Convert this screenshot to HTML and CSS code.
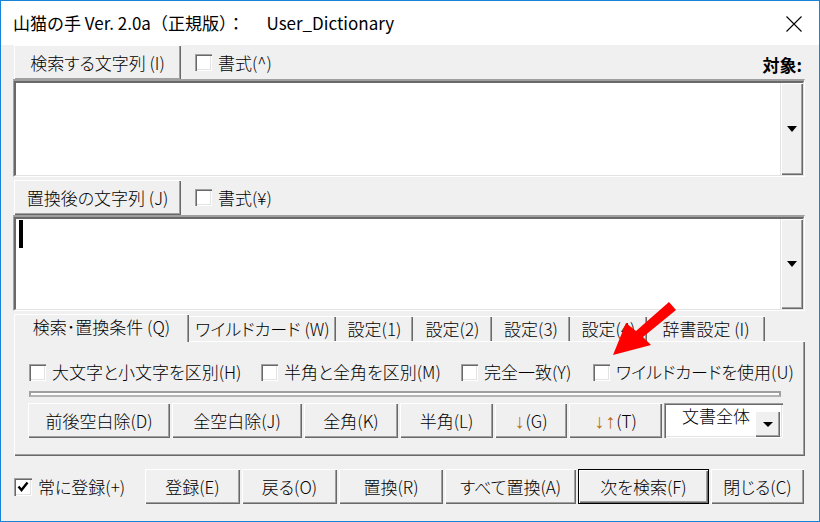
FILE: index.html
```html
<!DOCTYPE html>
<html lang="ja">
<head>
<meta charset="utf-8">
<title>山猫の手</title>
<link rel="stylesheet" href="styles.css">
</head>
<body>
<div class="window">
  <div class="titlebar">
    <span class="title">山猫の手 Ver. 2.0a（正規版）：<span class="title-name">User_Dictionary</span></span>
    <svg class="close" viewBox="0 0 16 16" width="16" height="16"><path d="M0.5 0.5 L15.5 15.5 M15.5 0.5 L0.5 15.5" stroke="#000" stroke-width="1.1" fill="none"/></svg>
  </div>
  <div class="content">
    <div class="labelrow">
      <div class="btn btn-label">検索する文字列 (I)</div>
      <div class="check"><span class="cb"></span><span>書式(^)</span></div>
      <span class="target">対象:</span>
    </div>
    <div class="box box-1">
      <div class="box-in">
        <div class="field"></div>
        <div class="dd"><span class="tri"></span></div>
      </div>
    </div>
    <div class="labelrow labelrow-2">
      <div class="btn btn-label">置換後の文字列 (J)</div>
      <div class="check"><span class="cb"></span><span>書式(¥)</span></div>
    </div>
    <div class="box box-2">
      <div class="box-in">
        <div class="field"><span class="caret"></span></div>
        <div class="dd"><span class="tri"></span></div>
      </div>
    </div>
    <div class="tabs">
      <div class="tab tab-active t1">検索･置換条件 (Q)</div>
      <div class="tab t2">ワイルドカード (W)</div>
      <div class="tab t3">設定(1)</div>
      <div class="tab t4">設定(2)</div>
      <div class="tab t5">設定(3)</div>
      <div class="tab t6">設定(4)</div>
      <div class="tab t7">辞書設定 (I)</div>
    </div>
    <div class="panel">
      <div class="opts">
        <div class="check opt-1"><span class="cb"></span><span>大文字と小文字を区別(H)</span></div>
        <div class="check opt-2"><span class="cb"></span><span>半角と全角を区別(M)</span></div>
        <div class="check opt-3"><span class="cb"></span><span>完全一致(Y)</span></div>
        <div class="check opt-4"><span class="cb"></span><span>ワイルドカードを使用(U)</span></div>
      </div>
      <div class="sep"></div>
      <div class="actions">
        <div class="btn b-trim">前後空白除(D)</div>
        <div class="btn b-space">全空白除(J)</div>
        <div class="btn b-zen">全角(K)</div>
        <div class="btn b-han">半角(L)</div>
        <div class="btn b-down"><span class="arr">↓</span>(G)</div>
        <div class="btn b-both"><span class="arr">↓</span><span class="arr arr-up">↑</span>(T)</div>
        <div class="combo">
          <span class="combo-text">文書全体</span>
          <div class="dd combo-dd"><span class="tri tri-sm"></span></div>
        </div>
      </div>
    </div>
    <div class="bottom">
      <div class="check keep"><span class="cb cb-lg"><svg viewBox="0 0 18 18" width="18" height="18"><path d="M4.5 8.5 L7.5 12 L13.5 4.5" stroke="#000" stroke-width="2.4" fill="none"/></svg></span><span>常に登録(+)</span></div>
      <div class="btn c-reg">登録(E)</div>
      <div class="btn c-back">戻る(O)</div>
      <div class="btn c-repl">置換(R)</div>
      <div class="btn c-all">すべて置換(A)</div>
      <div class="btn btn-default c-next">次を検索(F)</div>
      <div class="btn c-close">閉じる(C)</div>
    </div>
  </div>
  <svg class="pointer" viewBox="0 0 820 522" width="820" height="522">
    <polygon points="613,355 626,323 636,331 669,302 676,310 643,337 651,345" fill="#ff0000"/>
  </svg>
</div>
</body>
</html>
```
FILE: styles.css
```css
body {
  margin: 0;
}

.window {
  position: relative;
  width: 820px;
  height: 522px;
  box-sizing: border-box;
  border: 1px solid #1883d7;
  background: #f0f0f0;
  font-family: "Noto Sans CJK JP", "Noto Sans", sans-serif;
  font-size: 17px;
  line-height: 20px;
  font-weight: 300;
  font-feature-settings: "palt";
  color: #000;
  display: flex;
  flex-direction: column;
  overflow: hidden;
}

.titlebar {
  height: 44px;
  flex: none;
  background: #fff;
  display: flex;
  align-items: center;
  padding: 0 17px 0 12px;
}

.title {
  flex: 1;
  white-space: nowrap;
  font-size: 17px;
  font-weight: 400;
  font-feature-settings: normal;
}

.title-name {
  margin-left: 22px;
}

.close {
  display: block;
  margin-top: 1px;
}

.content {
  display: flex;
  flex-direction: column;
  padding: 0 14px 0 12px;
}

.labelrow {
  height: 35px;
  display: flex;
  align-items: center;
  flex: none;
}

.labelrow-2 {
  margin-top: 3px;
}

.btn {
  box-sizing: border-box;
  height: 35px;
  background: #f0f0f0;
  box-shadow: inset 1px 1px #ffffff, inset -1px -1px #696969, inset -2px -2px #a0a0a0;
  display: flex;
  align-items: center;
  justify-content: center;
  white-space: nowrap;
  flex: none;
}

.btn-label {
  width: 167px;
  margin-left: 1px;
}

.btn-default {
  border: 1px solid #000;
}

.check {
  display: flex;
  align-items: center;
  gap: 6px;
  white-space: nowrap;
  flex: none;
}

.labelrow .check {
  margin-left: 14px;
}

.cb {
  width: 17px;
  height: 17px;
  box-sizing: border-box;
  background: #fff;
  box-shadow: inset 1px 1px #a0a0a0, inset 2px 2px #696969, inset -1px -1px #ffffff, inset -2px -2px #e3e3e3;
  flex: none;
  display: block;
}

.cb svg {
  display: block;
}

.cb-lg {
  width: 18px;
  height: 18px;
}

.target {
  margin-left: auto;
  margin-right: 3px;
  margin-top: 4px;
  font-weight: 700;
}

.box {
  box-sizing: border-box;
  display: flex;
  flex: none;
  border-style: solid;
  border-width: 2px 1px 1px 1px;
  border-color: #a0a0a0 #ffffff #ffffff #a0a0a0;
}

.box-1 {
  height: 98px;
  margin-top: -1px;
}

.box-2 {
  height: 96px;
}

.box-in {
  flex: 1;
  display: flex;
  border-style: solid;
  border-width: 2px 1px 1px 2px;
  border-color: #696969 #e3e3e3 #e3e3e3 #696969;
}

.field {
  flex: 1;
  background: #fff;
  border-right: 1px solid #e3e3e3;
}

.caret {
  display: block;
  width: 4px;
  height: 28px;
  background: #000;
  margin: 1px 0 0 3px;
}

.dd {
  width: 22px;
  flex: none;
  box-sizing: border-box;
  background: #f0f0f0;
  box-shadow: inset 1px 1px #ffffff, inset -1px -1px #696969, inset -2px -2px #a0a0a0;
  display: flex;
  align-items: center;
  justify-content: center;
}

.tri {
  width: 0;
  height: 0;
  border-left: 5px solid transparent;
  border-right: 5px solid transparent;
  border-top: 6px solid #000;
}

.tri-sm {
  border-top-width: 5px;
}

.tabs {
  display: flex;
  align-items: flex-end;
  height: 27px;
  margin: 3px 0 0 1px;
  flex: none;
}

.tab {
  box-sizing: border-box;
  height: 25px;
  display: flex;
  align-items: center;
  justify-content: center;
  white-space: nowrap;
  box-shadow: inset 0 1px #ffffff, inset -1px 0 #696969, inset -2px 0 #a0a0a0;
}

.tab-active {
  height: 28px;
  margin-bottom: -1px;
  position: relative;
  z-index: 1;
  background: #f0f0f0;
  box-shadow: inset 1px 1px #ffffff, inset -1px 0 #696969, inset -2px 0 #a0a0a0;
  padding-bottom: 3px;
}

.t1 { width: 175px; }
.t2 { width: 147px; }
.t3 { width: 77px; }
.t4 { width: 79px; }
.t5 { width: 78px; }
.t6 { width: 77px; }
.t7 { width: 118px; }

.panel {
  box-sizing: border-box;
  height: 115px;
  margin-left: 1px;
  border-top: 1px solid #fff;
  border-left: 1px solid #fff;
  box-shadow: inset -1px -1px #696969, inset -2px -2px #a0a0a0;
  padding: 18px 20px 0 14px;
  flex: none;
}

.opts {
  display: flex;
  align-items: center;
  height: 24px;
}

.opt-1 { width: 232px; }
.opt-2 { width: 200px; }
.opt-3 { width: 132px; }

.sep {
  box-sizing: border-box;
  width: 752px;
  height: 6px;
  margin-top: 7px;
  border: 2px solid #a0a0a0;
  border-bottom-color: #b4b4b4;
  background: #fcfcfc;
}

.actions {
  display: flex;
  gap: 2px;
  margin: 6px 0 0 -1px;
}

.b-trim { width: 142px; }
.b-space { width: 130px; }
.b-zen { width: 94px; }
.b-han { width: 93px; }
.b-down { width: 72px; }
.b-both { width: 93px; }

.arr {
  font-family: "Liberation Sans", "DejaVu Sans", sans-serif;
  font-size: 20px;
  color: #c07412;
  margin-right: 1px;
}

.arr-up {
  color: #b86a10;
}

.combo {
  box-sizing: border-box;
  width: 119px;
  height: 35px;
  background: #fff;
  box-shadow: inset 1px 1px #a0a0a0, inset 2px 2px #696969, inset -1px -1px #ffffff, inset -2px -2px #e3e3e3;
  display: flex;
  padding: 3px 3px 1px 18px;
  flex: none;
}

.combo-text {
  flex: 1;
  white-space: nowrap;
}

.combo-dd {
  width: 25px;
  height: 26px;
  align-self: flex-end;
}

.bottom {
  display: flex;
  align-items: center;
  gap: 2px;
  height: 35px;
  margin-top: 13px;
  padding-left: 1px;
  flex: none;
}

.keep { width: 129px; }
.c-reg { width: 95px; }
.c-back { width: 95px; }
.c-repl { width: 104px; }
.c-all { width: 131px; }
.c-next { width: 131px; }
.c-close { width: 93px; }

.pointer {
  position: absolute;
  left: -1px;
  top: -1px;
  pointer-events: none;
}
```
